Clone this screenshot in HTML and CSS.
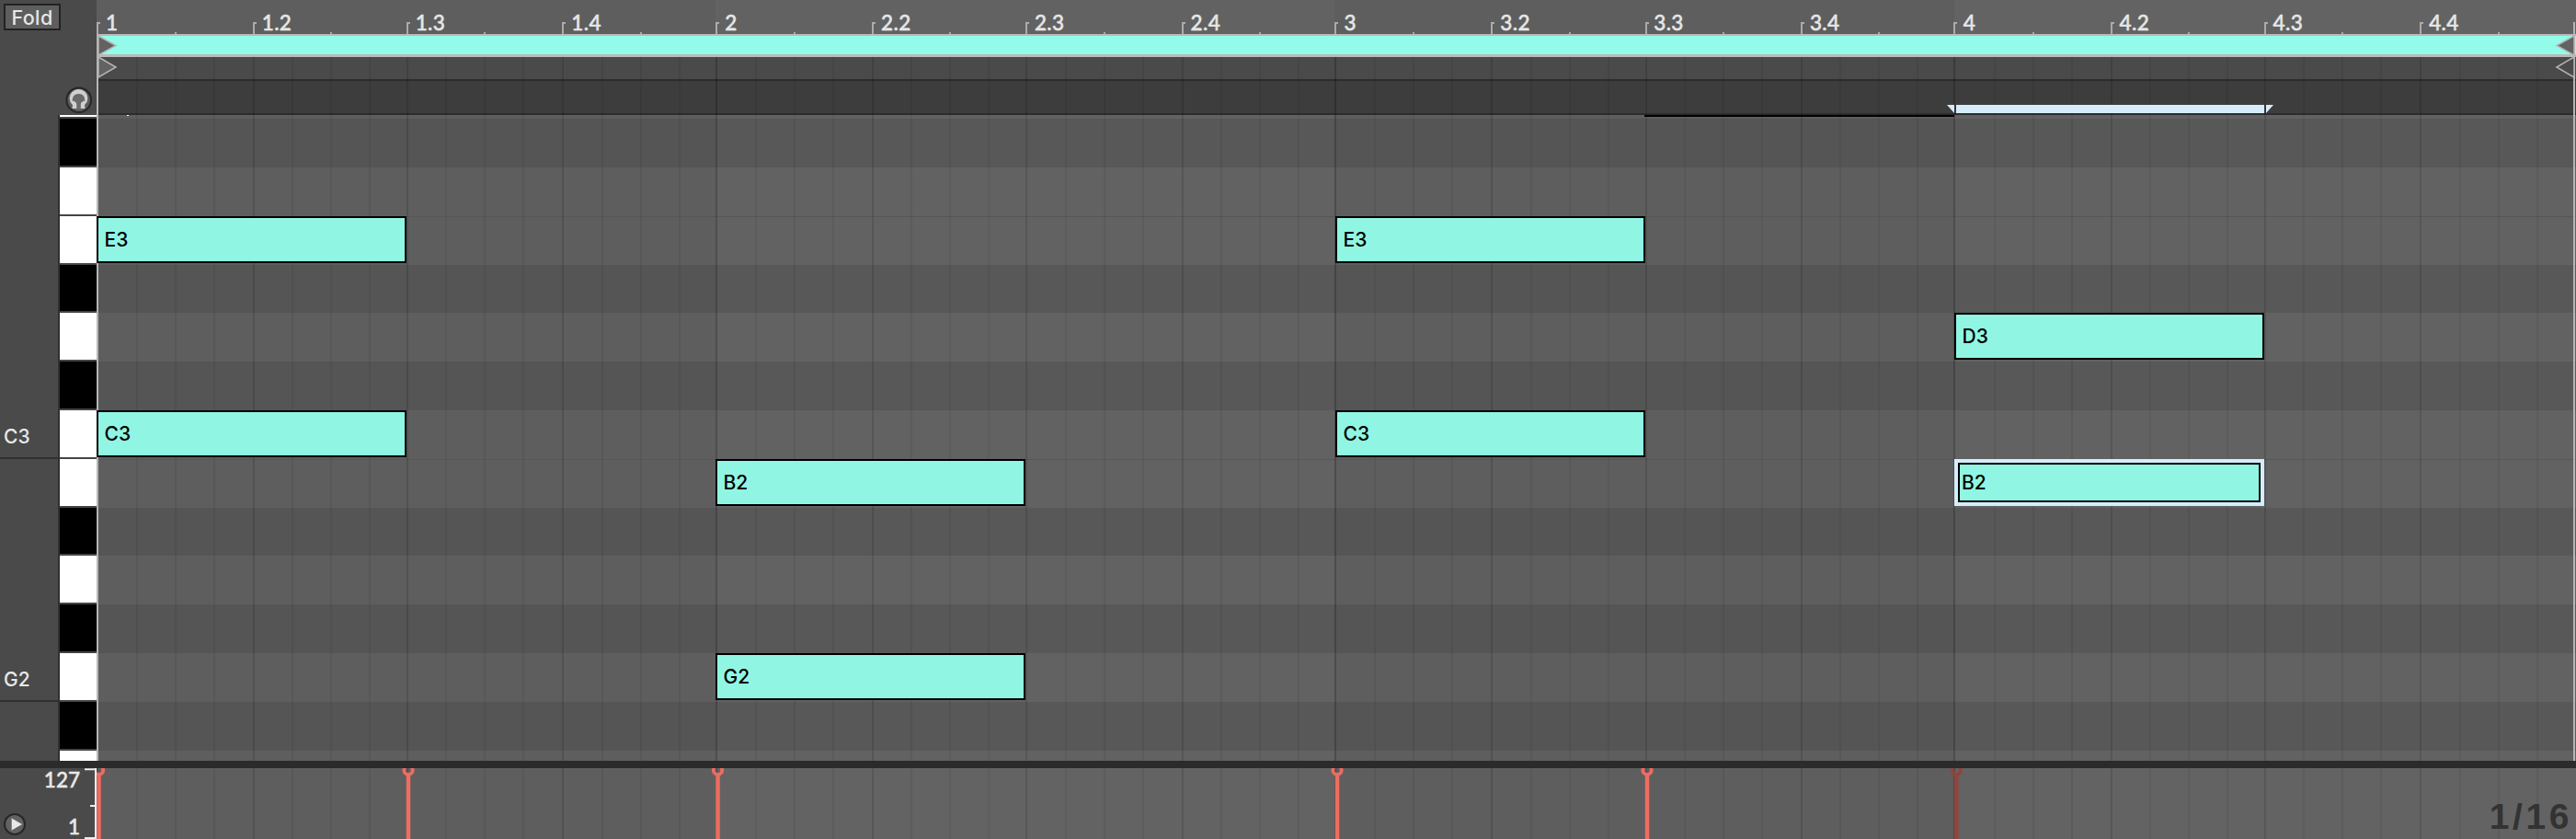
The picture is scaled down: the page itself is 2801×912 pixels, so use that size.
FILE: index.html
```html
<!DOCTYPE html>
<html lang="en">
<head>
<meta charset="utf-8">
<title>MIDI Clip Editor</title>
<link rel="stylesheet" href="styles.css">
</head>
<body>
<main class="editor">
  <aside class="sidebar">
    <div class="side-top">
      <button class="fold">Fold</button>
      <svg class="preview" viewBox="0 0 30 30"><circle cx="14.7" cy="14.7" r="13.3" fill="#5c5c5c" stroke="#272727" stroke-width="2"/><path d="M7.5 24L8 20.3A9.9 9.9 0 1 1 21 20.3L21.5 24z" fill="#cfcfcf"/><path d="M7.5 15.6Q7.6 8.3 14.4 8T21.4 15.6Q17.2 16.4 16.8 19V25H12.3V19Q11.8 16.4 7.5 15.6z" fill="#6a6a6a"/></svg>
    </div>
    <div class="key-area">
      <div class="key-labels"><div class="octave first"><span>C3</span></div><div class="octave second"><span>G2</span></div></div>
      <div class="keys"></div>
    </div>
  </aside>
  <section class="timeline">
    <div class="ruler"></div>
    <div class="loop-bar"></div>
    <div class="region-bar"></div>
    <div class="scrub-bar"></div>
    <div class="note-rows"></div>
    <svg class="overlay" width="2696" height="827"></svg>
    <div class="notes"></div>
  </section>
  <div class="divider"></div>
  <aside class="velocity-side">
    <svg class="play" viewBox="0 0 24 24"><circle cx="12" cy="12" r="11" fill="#626262" stroke="#272727" stroke-width="2"/><path d="M8.7 5.4v13.2L20 12z" fill="#e8e8e8"/></svg>
    <div class="scale"><span>127</span><span>1</span></div>
    <svg class="axis" width="13" height="77"><path d="M0 1.3h12M6 41h6M0 76h12M12 0v77" fill="none" stroke="#ececec" stroke-width="2"/></svg>
  </aside>
  <section class="velocity"><svg class="velocity-plot" width="2696" height="77"></svg><span class="grid-size">1/16</span></section>
</main>
<script src="script.js"></script>
</body>
</html>
```
FILE: styles.css
```css
* { box-sizing: border-box; }
body { margin: 0; background: #4a4a4a; font-family: Inter, "Liberation Sans", sans-serif; overflow: hidden; }
svg { display: block; }
.editor { display: grid; grid-template: 827px 8px 77px / 105px 2696px; width: 2801px; height: 912px; }
.sidebar { display: flex; flex-direction: column; background: #4a4a4a; overflow: hidden; }
.side-top { height: 125px; display: flex; flex-direction: column; justify-content: space-between; flex: none; padding: 4px 4px 1px; }
.fold { width: 62px; height: 29px; padding: 0; border: 2px solid #222; background: #5e5e5e; color: #e6e6e6; font: 500 21.5px/24px Inter, sans-serif; letter-spacing: .4px; }
.preview { width: 30px; height: 30px; align-self: flex-end; }
.key-area { display: grid; grid-template-columns: 63px 42px; height: 702px; }
.octave { display: flex; align-items: flex-end; padding: 0 0 9px 4px; border-bottom: 2px solid #303030; color: #e8e8e8; font-size: 21px; font-weight: 500; line-height: 26px; }
.first { height: 374px; }
.second { height: 264px; }
.keys { border-left: 2px solid #303030; background: #3e3e3e; overflow: hidden; }
.key { height: 52.8px; border-bottom: 2px solid #454545; background: #fff; }
.key.black { background: #000; }
.key:first-child { height: 4.2px; }
.timeline { position: relative; display: flex; flex-direction: column; overflow: hidden; }
.ruler { height: 37px; display: grid; grid-template-columns: repeat(8, 169.7px 166.967px); background: linear-gradient(90deg, #5e5e5e 673px, #626262 673px 1346px, #5e5e5e 1346px 2020px, #636363 2020px); color: #e6e6e6; }
.ruler span { padding: 12px 0 0 10px; font: 500 22.5px/26px Lato, sans-serif; -webkit-text-stroke: .5px #e6e6e6; letter-spacing: .4px; white-space: nowrap; }
.loop-bar { height: 25px; border: solid #bababa; border-width: 2px 0 3px; background: #92fbe9; }
.region-bar { height: 24px; background: #4a4a4a; }
.scrub-bar { height: 39px; border: solid #2c2c2c; border-width: 2px 0; background: #3d3d3d; }
.note-rows { height: 702px; overflow: hidden; }
.row { height: 52.8px; background: linear-gradient(90deg, #5e5e5e 673px, #626262 673px 1346px, #5e5e5e 1346px 2020px, #626262 2020px); }
.row.dark { background: linear-gradient(90deg, #555 673px, #585858 673px 1346px, #555 1346px 2020px, #585858 2020px); }
.row.ruled { border-top: 1px solid #575757; }
.row:first-child { height: 4.2px; }
.overlay { position: absolute; inset: 0; }
.note { position: absolute; width: 337px; height: 51px; padding-left: 6.5px; border: 2px solid #000; background: #90f6e3; color: #000; font-size: 21px; font-weight: 500; line-height: 48px; }
.note.selected { padding-left: 2px; outline: 4px solid #d5edfb; width: 329px; height: 43px; line-height: 40px; margin: 4px; }
.divider { grid-column: 1 / -1; background: #2b2b2b; }
.velocity-side { display: grid; grid-template-columns: 24px 1fr 13px; padding-left: 4px; background: #4a4a4a; }
.play { width: 24px; height: 24px; margin-top: 49px; }
.scale { display: flex; flex-direction: column; justify-content: space-between; align-items: flex-end; margin-right: 5px; color: #e8e8e8; font: 500 22.5px/26px Lato, sans-serif; -webkit-text-stroke: .5px #e8e8e8; }
.velocity { position: relative; background: linear-gradient(90deg, #5e5e5e 673px, #636363 673px 1346px, #5e5e5e 1346px 2020px, #636363 2020px); }
.grid-size { position: absolute; right: 4px; bottom: 0; color: #333; font: bold 39px/49px "Liberation Sans", sans-serif; letter-spacing: 3.6px; }
```
FILE: script.js
```js
const bar = 673.333, beat = bar / 4;
const pitches = ['white', 'black', 'white', 'white', 'black', 'white', 'black', 'white', 'white', 'black', 'white', 'black', 'white', 'black', 'white'];
const keys = document.querySelector('.keys'), rows = document.querySelector('.note-rows');
pitches.forEach((p, i) => {
  keys.insertAdjacentHTML('beforeend', `<div class="key ${p}"></div>`);
  const ruled = i && p === 'white' && pitches[i - 1] === 'white';
  rows.insertAdjacentHTML('beforeend', `<div class="row ${p === 'black' ? 'dark' : ''} ${ruled ? 'ruled' : ''}"></div>`);
});

const ruler = document.querySelector('.ruler');
let grid = '', velocityGrid = '';
for (let i = 0; i < 64; i++) {
  const x = Math.floor(i * beat / 4 + (i % 8 >= 4 ? 2 : i % 8 ? 1 : i % 16 ? 1 : 0));
  const a = i % 16 === 0 ? .2 : i % 4 === 0 ? .12 : .06;
  const line = (y, h) => `<rect x="${x}" y="${y}" width="2" height="${h}" fill="#000" opacity="${a}"/>`;
  grid += line(62, 765);
  velocityGrid += line(0, 77);
  if (i % 4 === 0) {
    grid += `<path d="M${x + 1} 37V25h3" fill="none" stroke="#ababab" stroke-width="2"/>`;
    const b = i / 4;
    ruler.insertAdjacentHTML('beforeend', `<span>${Math.floor(b / 4) + 1}${b % 4 ? '.' + (b % 4 + 1) : ''}</span>`);
  } else if (i % 2 === 0) {
    grid += `<rect x="${x}" y="35" width="2" height="2" fill="#aaa"/>`;
  }
}
grid += `<rect width="2" y="37" height="790" fill="#b5b5b5"/><rect x="2693" y="24" width="2" height="803" fill="#b5b5b5"/>
<path d="M2 39L21 49.5 2 60z" fill="#626262" stroke="#b5b5b5" stroke-width="1.5"/>
<path d="M2 62L21 73 2 84z" fill="#626262" stroke="#b5b5b5" stroke-width="1.5"/>
<path d="M2694 39L2675 49.5 2694 60z" fill="#626262" stroke="#b5b5b5" stroke-width="1.5"/>
<path d="M2694 62L2675 73 2694 84z" fill="#4a4a4a" stroke="#b5b5b5" stroke-width="1.5"/>
<path d="M2012 114h8v9zM2022 114h335v9h-335zM2359 114h8l-8 9z" fill="#d5edfb"/>
<rect x="1683" y="125" width="337" height="2" fill="#000"/><rect x="33" y="125" width="2" height="1" fill="#fff"/>`;
document.querySelector('.overlay').innerHTML = grid;

const notes = [['E3', 0, 2], ['C3', 0, 6], ['B2', 673, 7], ['G2', 673, 11], ['E3', 1347, 2], ['C3', 1347, 6], ['D3', 2020, 4], ['B2', 2020, 7, 'selected']];
document.querySelector('.notes').innerHTML = notes.map(([n, x, r, c = '']) =>
  `<div class="note ${c}" style="left:${x}px;top:${Math.round(129.2 + r * 52.8)}px">${n}</div>`).join('');

const marker = (x, color, width) => `<g fill="none" stroke="${color}"><circle cx="${x}" cy="2.2" r="4.7" stroke-width="3.8"/><path d="M${x} 7v70" stroke-width="${width}"/></g>`;
document.querySelector('.velocity-plot').innerHTML = velocityGrid +
  [2.5, 339, 675.5, 1349, 1686].map(x => marker(x, '#ee6c60', 4.5)).join('') + marker(2022.3, '#91443c', 4.5);
```
